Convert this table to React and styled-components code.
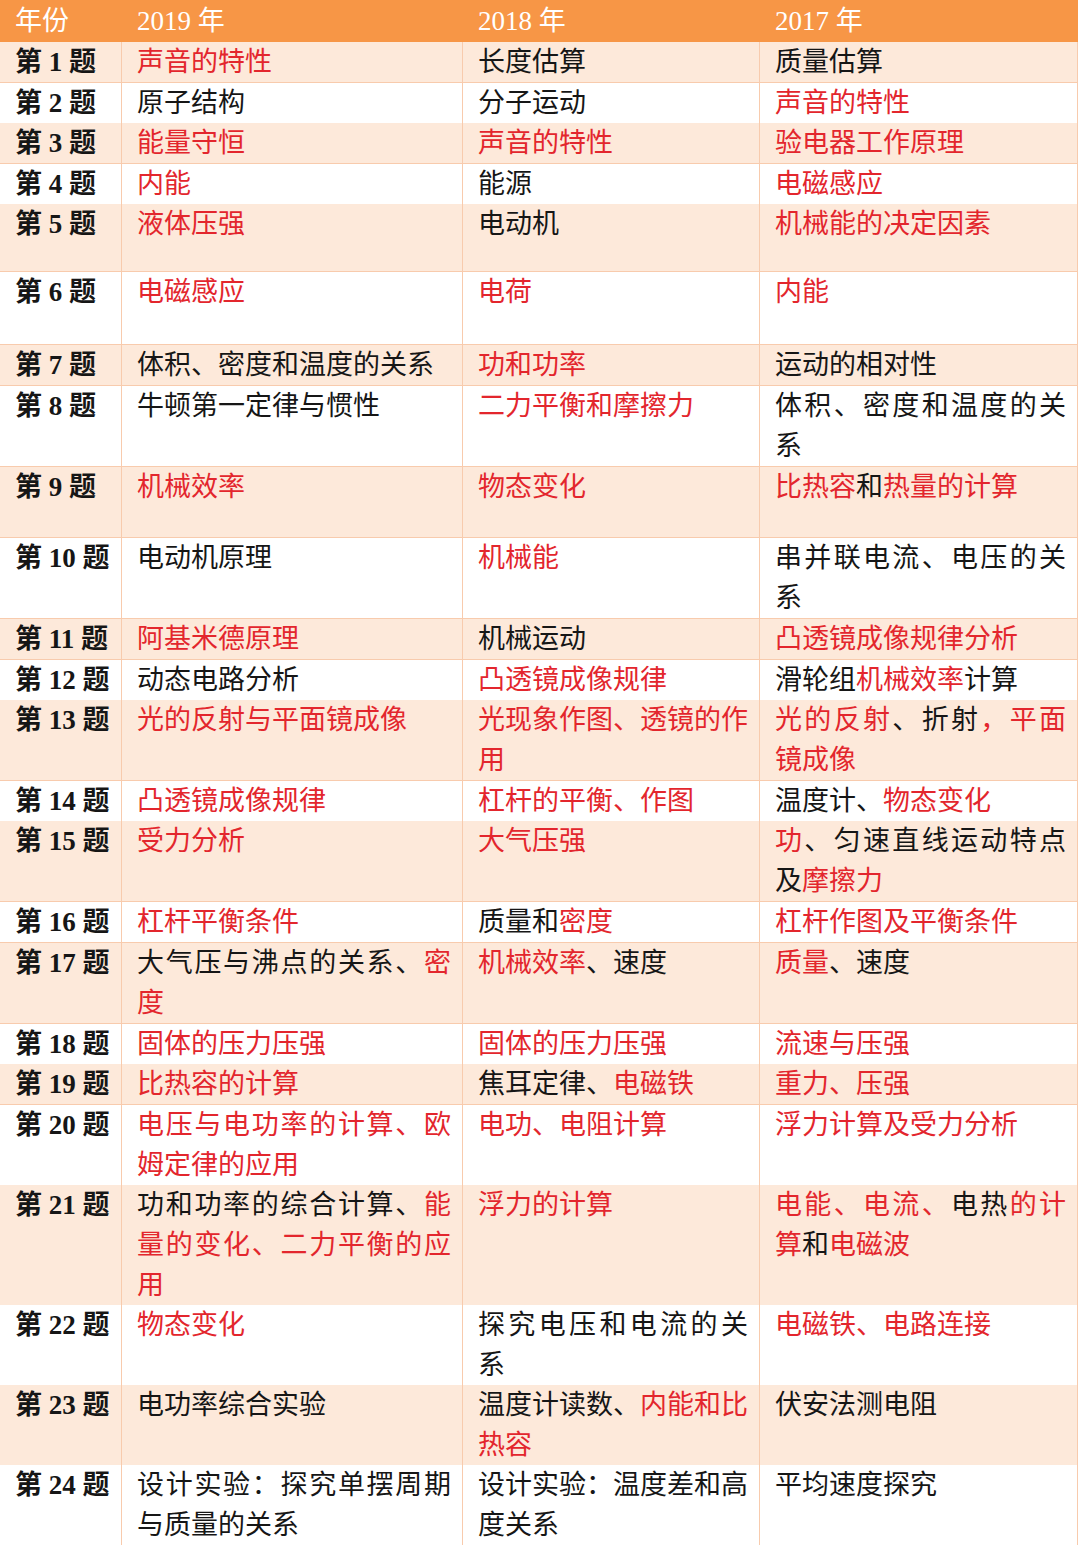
import React from "react";
import styled, { createGlobalStyle } from "styled-components";

const Global = createGlobalStyle`
  html, body { margin: 0; padding: 0; background: #ffffff; }
  body { font-family: "Liberation Serif", "Noto Sans CJK SC", serif; }
`;

const COLS = "122px 341px 297px 318px";

const Table = styled.div`
  width: 1078px;
  display: flex;
  flex-direction: column;
`;

const HeaderRow = styled.div`
  display: grid;
  grid-template-columns: ${COLS};
  height: 42px;
  background: #f79646;
  color: #ffffff;
`;

const HeaderCell = styled.div`
  padding: 0 11px 0 15px;
  font-size: 27px;
  line-height: 42px;
  white-space: nowrap;
`;

const Row = styled.div`
  display: grid;
  grid-template-columns: ${COLS};
  height: ${(p) => p.$h}px;
  background: ${(p) => (p.$alt ? "#fde9da" : "#ffffff")};
`;

const Cell = styled.div`
  box-sizing: border-box;
  border-right: 1px solid #f8cbad;
  border-bottom: 1px solid #f8cbad;
  padding: 0 11px 0 15px;
  font-size: 27px;
  line-height: 40px;
  color: #161616;
  font-weight: ${(p) => (p.$bold ? 700 : 400)};
  overflow: visible;
`;

const Line = styled.div`
  white-space: nowrap;
  text-align: left;
  text-align-last: ${(p) => (p.$justify ? "justify" : "left")};
`;

const Red = styled.span`
  color: #e3262d;
`;

// "|" separates lines, [..] marks red text
const rows = [
  ["第 1 题", "[声音的特性]", "长度估算", "质量估算", 41],
  ["第 2 题", "原子结构", "分子运动", "[声音的特性]", 40],
  ["第 3 题", "[能量守恒]", "[声音的特性]", "[验电器工作原理]", 41],
  ["第 4 题", "[内能]", "能源", "[电磁感应]", 40],
  ["第 5 题", "[液体压强]", "电动机", "[机械能的决定因素]", 68],
  ["第 6 题", "[电磁感应]", "[电荷]", "[内能]", 73],
  ["第 7 题", "体积、密度和温度的关系", "[功和功率]", "运动的相对性", 41],
  ["第 8 题", "牛顿第一定律与惯性", "[二力平衡和摩擦力]", "体积、密度和温度的关|系", 81],
  ["第 9 题", "[机械效率]", "[物态变化]", "[比热容]和[热量的计算]", 71],
  ["第 10 题", "电动机原理", "[机械能]", "串并联电流、电压的关|系", 81],
  ["第 11 题", "[阿基米德原理]", "机械运动", "[凸透镜成像规律分析]", 41],
  ["第 12 题", "动态电路分析", "[凸透镜成像规律]", "滑轮组[机械效率]计算", 40],
  ["第 13 题", "[光的反射与平面镜成像]", "[光现象作图、透镜的作]|[用]", "[光的反射]、折射[，平面]|[镜成像]", 81],
  ["第 14 题", "[凸透镜成像规律]", "[杠杆的平衡、作图]", "温度计、[物态变化]", 40],
  ["第 15 题", "[受力分析]", "[大气压强]", "[功]、匀速直线运动特点|及[摩擦力]", 81],
  ["第 16 题", "[杠杆平衡条件]", "质量和[密度]", "[杠杆作图及平衡条件]", 41],
  ["第 17 题", "大气压与沸点的关系、[密]|[度]", "[机械效率]、速度", "[质量]、速度", 81],
  ["第 18 题", "[固体的压力压强]", "[固体的压力压强]", "[流速与压强]", 40],
  ["第 19 题", "[比热容的计算]", "焦耳定律、[电磁铁]", "[重力、压强]", 41],
  ["第 20 题", "[电压与电功率的计算、欧]|[姆定律的应用]", "[电功、电阻计算]", "[浮力计算及受力分析]", 80],
  ["第 21 题", "功和功率的综合计算、[能]|[量的变化、二力平衡的应]|[用]", "[浮力的计算]", "[电能、电流、]电热[的计]|[算]和[电磁波]", 120],
  ["第 22 题", "[物态变化]", "探究电压和电流的关|系", "[电磁铁、电路连接]", 80],
  ["第 23 题", "电功率综合实验", "温度计读数、[内能和比]|[热容]", "伏安法测电阻", 80],
  ["第 24 题", "设计实验：探究单摆周期|与质量的关系", "设计实验：温度差和高|度关系", "平均速度探究", 80],
];

function renderSegments(text) {
  const parts = [];
  const re = /\[([^\]]*)\]|([^[]+)/g;
  let m;
  let i = 0;
  while ((m = re.exec(text)) !== null) {
    if (m[1] !== undefined) parts.push(<Red key={i++}>{m[1]}</Red>);
    else parts.push(<span key={i++}>{m[2]}</span>);
  }
  return parts;
}

function CellText({ text }) {
  const lines = text.split("|");
  return lines.map((l, idx) => (
    <Line key={idx} $justify={idx < lines.length - 1}>
      {renderSegments(l)}
    </Line>
  ));
}

export default function App() {
  return (
    <>
      <Global />
      <Table>
        <HeaderRow>
          <HeaderCell>年份</HeaderCell>
          <HeaderCell>2019 年</HeaderCell>
          <HeaderCell>2018 年</HeaderCell>
          <HeaderCell>2017 年</HeaderCell>
        </HeaderRow>
        {rows.map(([label, a, b, c, h], i) => (
          <Row key={label} $h={h} $alt={i % 2 === 0}>
            <Cell $bold>{label}</Cell>
            <Cell>
              <CellText text={a} />
            </Cell>
            <Cell>
              <CellText text={b} />
            </Cell>
            <Cell>
              <CellText text={c} />
            </Cell>
          </Row>
        ))}
      </Table>
    </>
  );
}
